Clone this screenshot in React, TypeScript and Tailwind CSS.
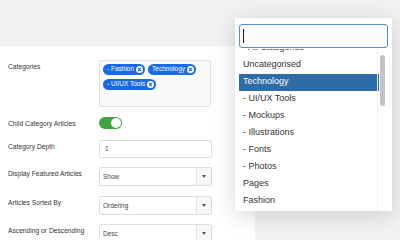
import React from "react";

const font = { fontFamily: '"Liberation Sans", Arial, Helvetica, sans-serif' };

function TagX() {
  return (
    <svg width="7" height="7" viewBox="0 0 10 10" className="ml-[2px] shrink-0">
      <circle cx="5" cy="5" r="5" fill="#fff" />
      <path d="M3.2 3.2 L6.8 6.8 M6.8 3.2 L3.2 6.8" stroke="#1a6ae6" strokeWidth="1.6" strokeLinecap="round" />
    </svg>
  );
}

function Tag({ label }: { label: string }) {
  return (
    <span className="inline-flex items-center h-[11px] rounded-full bg-[#1a6ae6] pl-[4px] pr-[2px] text-[6.5px] leading-none text-white">
      {label}
      <TagX />
    </span>
  );
}

function Select({ value }: { value: string }) {
  return (
    <div className="flex h-[19px] w-[113px] rounded-[2px] border border-[#dedede] bg-white">
      <div className="flex flex-1 items-center pl-[3px] text-[6.5px] text-[#444]">{value}</div>
      <div className="flex w-[15px] items-center justify-center border-l border-[#e2e2e2] bg-[#f7f7f7]">
        <svg width="4" height="3" viewBox="0 0 4 3">
          <path d="M0 0 L4 0 L2 3 Z" fill="#555" />
        </svg>
      </div>
    </div>
  );
}

function Row({ label, children, className }: { label: string; children: React.ReactNode; className: string }) {
  return (
    <div className={"flex items-start " + className}>
      <div className="w-[99px] shrink-0 pl-[8px] pt-[2px] text-[6.7px] leading-[10px] text-[#333]">{label}</div>
      {children}
    </div>
  );
}

const items = [
  "- All Categories",
  "Uncategorised",
  "Technology",
  "- UI/UX Tools",
  "- Mockups",
  "- Illustrations",
  "- Fonts",
  "- Photos",
  "Pages",
  "Fashion",
];

export default function App() {
  return (
    <div className="relative h-[240px] w-[400px] overflow-hidden bg-[#f2f2f2]" style={font}>
      <div className="h-[46px]" />
      <div className="h-[194px] w-[255px] bg-white pt-[14px]">
        <Row label="Categories" className="">
          <div className="h-[47px] w-[112px] rounded-[2px] border border-[#e0e0e0] bg-[#fafafa] p-[3px]">
            <div className="flex flex-wrap gap-x-[3px] gap-y-[4px]">
              <Tag label="- Fashion" />
              <Tag label="Technology" />
              <Tag label="- UI/UX Tools" />
            </div>
          </div>
        </Row>
        <Row label="Child Category Articles" className="mt-[10px]">
          <div className="flex h-[12px] w-[23px] items-center justify-end rounded-full bg-[#3fa544] pr-[1px]">
            <div className="h-[10px] w-[10px] rounded-full bg-white" />
          </div>
        </Row>
        <Row label="Category Depth" className="mt-[11px]">
          <div className="flex h-[18px] w-[113px] items-center rounded-[2px] border border-[#dedede] bg-white pl-[5px] text-[6.5px] text-[#444]">
            1
          </div>
        </Row>
        <Row label="Display Featured Articles" className="mt-[9px]">
          <Select value="Show" />
        </Row>
        <Row label="Articles Sorted By" className="mt-[10px]">
          <Select value="Ordering" />
        </Row>
        <Row label="Ascending or Descending" className="mt-[9px]">
          <Select value="Desc" />
        </Row>
      </div>

      <div className="absolute left-[235px] top-[18px] h-[193px] w-[157px] bg-white shadow-[0_4px_22px_rgba(0,0,0,0.16)]">
        <div className="relative z-10 mx-[4px] mt-[6px] flex h-[24px] items-center rounded-[3px] border border-[#5d8dbb] bg-[#fbfbfb] pl-[3px]">
          <div className="h-[14px] w-[1px] bg-[#222]" />
        </div>
        <div className="relative ml-[4px] mr-[2px] mt-[1px] h-[162px] overflow-hidden">
          <div className="-mt-[9.5px]">
            {items.map((it) => (
              <div
                key={it}
                className={
                  "flex h-[17px] items-center pl-[4px] text-[9px] " +
                  (it === "Technology" ? "mr-[11px] bg-[#2d6ca7] text-white" : "text-[#333]")
                }
              >
                {it}
              </div>
            ))}
          </div>
          <div className="absolute right-[5px] top-[6px] h-[51px] w-[5px] rounded-full bg-[#c4c4c4]" />
          <div className="absolute right-[12px] top-0 h-full w-[1px] bg-[#f0f0f0]" />
        </div>
      </div>
    </div>
  );
}
